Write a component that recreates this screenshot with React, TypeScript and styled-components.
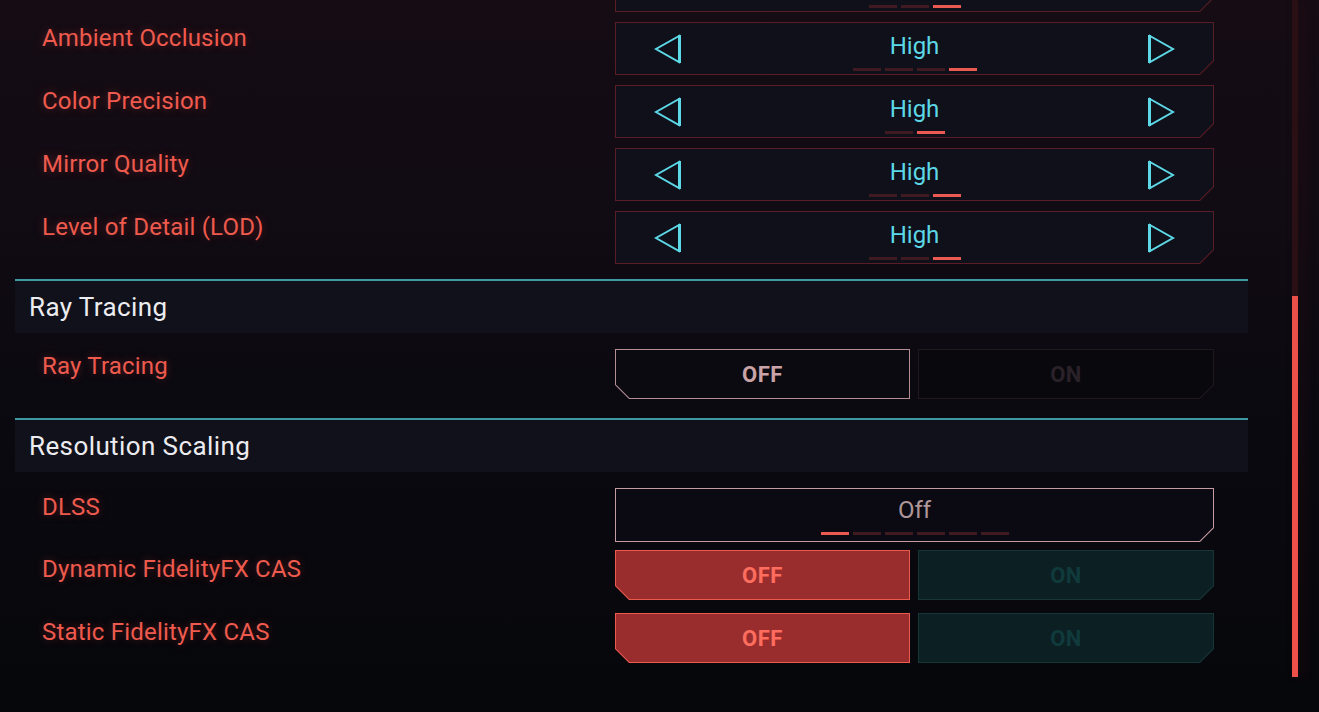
import React from "react";
import styled, { createGlobalStyle } from "styled-components";

const GlobalStyle = createGlobalStyle`
  html, body {
    margin: 0;
    padding: 0;
    height: 100%;
    overflow: hidden;
  }
  body {
    background: linear-gradient(180deg, #150c14 0%, #110b13 30%, #0a0910 60%, #06070b 100%);
    font-family: Roboto, "Liberation Sans", sans-serif;
  }
`;

const Page = styled.div`
  display: flex;
  width: 1319px;
  height: 712px;
  overflow: hidden;
`;

const Main = styled.div`
  display: flex;
  flex-direction: column;
  width: 1233px;
  margin-left: 15px;
  margin-top: -41px;
`;

const Row = styled.div<{ $mb: number }>`
  display: flex;
  align-items: flex-start;
  padding-left: 27px;
  margin-bottom: ${({ $mb }) => $mb}px;
`;

const Label = styled.div<{ $pt: number }>`
  width: 573px;
  padding-top: ${({ $pt }) => $pt}px;
  font-size: 24px;
  line-height: 28px;
  letter-spacing: 0.2px;
  color: #ee5a4d;
  text-shadow: 0 0 8px rgba(230, 70, 60, 0.35);
`;

const SectionHeader = styled.div<{ $mt: number; $mb: number }>`
  display: flex;
  align-items: center;
  height: 52px;
  margin-top: ${({ $mt }) => $mt}px;
  margin-bottom: ${({ $mb }) => $mb}px;
  padding-left: 14px;
  border-top: 2px solid #3e9aa2;
  background: #11111b;
  font-size: 26px;
  font-weight: 400;
  letter-spacing: 0.4px;
  color: #ececf0;
`;

const cutBR = (c: number) =>
  `polygon(0 0, 100% 0, 100% calc(100% - ${c}px), calc(100% - ${c}px) 100%, 0 100%)`;
const cutBL = (c: number) =>
  `polygon(0 0, 100% 0, 100% 100%, ${c}px 100%, 0 calc(100% - ${c}px))`;

const Frame = styled.div<{
  $w: number;
  $h: number;
  $cut: "br" | "bl";
  $border: string;
  $bg: string;
}>`
  position: relative;
  width: ${({ $w }) => $w}px;
  height: ${({ $h }) => $h}px;
  background: ${({ $border }) => $border};
  clip-path: ${({ $cut }) => ($cut === "br" ? cutBR(14) : cutBL(14))};
  display: flex;
  box-sizing: border-box;

  &::before {
    content: "";
    position: absolute;
    inset: 1px;
    background: ${({ $bg }) => $bg};
    clip-path: ${({ $cut }) => ($cut === "br" ? cutBR(13.5) : cutBL(13.5))};
  }

  & > * {
    position: relative;
  }
`;

const SliderInner = styled.div`
  display: flex;
  align-items: stretch;
  width: 100%;
  padding: 0 39px;
  box-sizing: border-box;
`;

const ArrowBox = styled.div`
  display: flex;
  align-items: center;
  width: 28px;
`;

const Center = styled.div<{ $pt: number }>`
  flex: 1;
  display: flex;
  flex-direction: column;
  align-items: center;
  padding-top: ${({ $pt }) => $pt}px;
`;

const Value = styled.div<{ $color: string }>`
  height: 24px;
  font-size: 24px;
  line-height: 24px;
  color: ${({ $color }) => $color};
`;

const Dashes = styled.div<{ $mt: number }>`
  display: flex;
  gap: 4px;
  margin-top: ${({ $mt }) => $mt}px;
`;

const Dash = styled.div<{ $active: boolean }>`
  width: 28px;
  height: 3px;
  background: ${({ $active }) => ($active ? "#ea5a50" : "#3f1a20")};
`;

const Toggles = styled.div`
  display: flex;
  gap: 8px;
`;

const ToggleText = styled.div<{ $color: string }>`
  flex: 1;
  display: flex;
  align-items: center;
  justify-content: center;
  font-size: 22px;
  font-weight: 700;
  letter-spacing: 0.5px;
  color: ${({ $color }) => $color};
`;

const Scroll = styled.div`
  display: flex;
  flex-direction: column;
  width: 6px;
  height: 677px;
  margin-left: 44px;
  background: #2a0f15;
  box-shadow: 6px 0 12px rgba(80, 10, 20, 0.25);
`;

const Thumb = styled.div<{ $top: number }>`
  margin-top: ${({ $top }) => $top}px;
  flex: 1;
  background: #ec5048;
`;

const CYAN = "#5cd8e6";

const LeftArrow = () => (
  <svg width="28" height="30" viewBox="0 0 28 30">
    <path d="M25 2 L2 15 L25 28 Z" fill="none" stroke={CYAN} strokeWidth="2" strokeLinejoin="miter" />
    <path d="M25.5 1 V29" stroke={CYAN} strokeWidth="3" />
  </svg>
);

const RightArrow = () => (
  <svg width="28" height="30" viewBox="0 0 28 30">
    <path d="M3 2 L26 15 L3 28 Z" fill="none" stroke={CYAN} strokeWidth="2" strokeLinejoin="miter" />
    <path d="M2.5 1 V29" stroke={CYAN} strokeWidth="3" />
  </svg>
);

const Slider: React.FC<{ count: number; active: number; value: string }> = ({
  count,
  active,
  value,
}) => (
  <Frame $w={599} $h={53} $cut="br" $border="#5a1c25" $bg="#10101b">
    <SliderInner>
      <ArrowBox>{value && <LeftArrow />}</ArrowBox>
      <Center $pt={12}>
        <Value $color={CYAN}>{value}</Value>
        <Dashes $mt={10}>
          {Array.from({ length: count }).map((_, i) => (
            <Dash key={i} $active={i === active} />
          ))}
        </Dashes>
      </Center>
      <ArrowBox>{value && <RightArrow />}</ArrowBox>
    </SliderInner>
  </Frame>
);

const Toggle: React.FC<{ variant: "outline" | "red" }> = ({ variant }) =>
  variant === "outline" ? (
    <Toggles>
      <Frame $w={295} $h={50} $cut="bl" $border="#b48e92" $bg="#0a0a10">
        <ToggleText $color="#c9a3a6">OFF</ToggleText>
      </Frame>
      <Frame $w={296} $h={50} $cut="br" $border="#1f181f" $bg="#08080d">
        <ToggleText $color="#2a2129">ON</ToggleText>
      </Frame>
    </Toggles>
  ) : (
    <Toggles>
      <Frame $w={295} $h={50} $cut="bl" $border="#ec5a4e" $bg="#992d2d">
        <ToggleText $color="#ff6d5e">OFF</ToggleText>
      </Frame>
      <Frame $w={296} $h={50} $cut="br" $border="#163638" $bg="#0c2024">
        <ToggleText $color="#103a3b">ON</ToggleText>
      </Frame>
    </Toggles>
  );

// the first row is scrolled mostly out of view: only its bottom edge shows
const sliders = [
  { label: "", value: "", count: 3, active: 2 },
  { label: "Ambient Occlusion", value: "High", count: 4, active: 3 },
  { label: "Color Precision", value: "High", count: 2, active: 1 },
  { label: "Mirror Quality", value: "High", count: 3, active: 2 },
  { label: "Level of Detail (LOD)", value: "High", count: 3, active: 2 },
];

export default function App() {
  return (
    <Page>
      <GlobalStyle />
      <Main>
        {sliders.map((s, i) => (
          <Row key={i} $mb={i === sliders.length - 1 ? 0 : 10}>
            <Label $pt={2}>{s.label}</Label>
            <Slider count={s.count} active={s.active} value={s.value} />
          </Row>
        ))}

        <SectionHeader $mt={15} $mb={16}>Ray Tracing</SectionHeader>
        <Row $mb={0}>
          <Label $pt={3}>Ray Tracing</Label>
          <Toggle variant="outline" />
        </Row>

        <SectionHeader $mt={19} $mb={16}>Resolution Scaling</SectionHeader>
        <Row $mb={8}>
          <Label $pt={5}>DLSS</Label>
          <Frame $w={599} $h={54} $cut="br" $border="#c49ca2" $bg="#0b0a12">
            <Center $pt={10}>
              <Value $color="#ae9699">Off</Value>
              <Dashes $mt={10}>
                {Array.from({ length: 6 }).map((_, i) => (
                  <Dash key={i} $active={i === 0} />
                ))}
              </Dashes>
            </Center>
          </Frame>
        </Row>
        <Row $mb={13}>
          <Label $pt={5}>Dynamic FidelityFX CAS</Label>
          <Toggle variant="red" />
        </Row>
        <Row $mb={0}>
          <Label $pt={5}>Static FidelityFX CAS</Label>
          <Toggle variant="red" />
        </Row>
      </Main>
      <Scroll>
        <Thumb $top={296} />
      </Scroll>
    </Page>
  );
}
